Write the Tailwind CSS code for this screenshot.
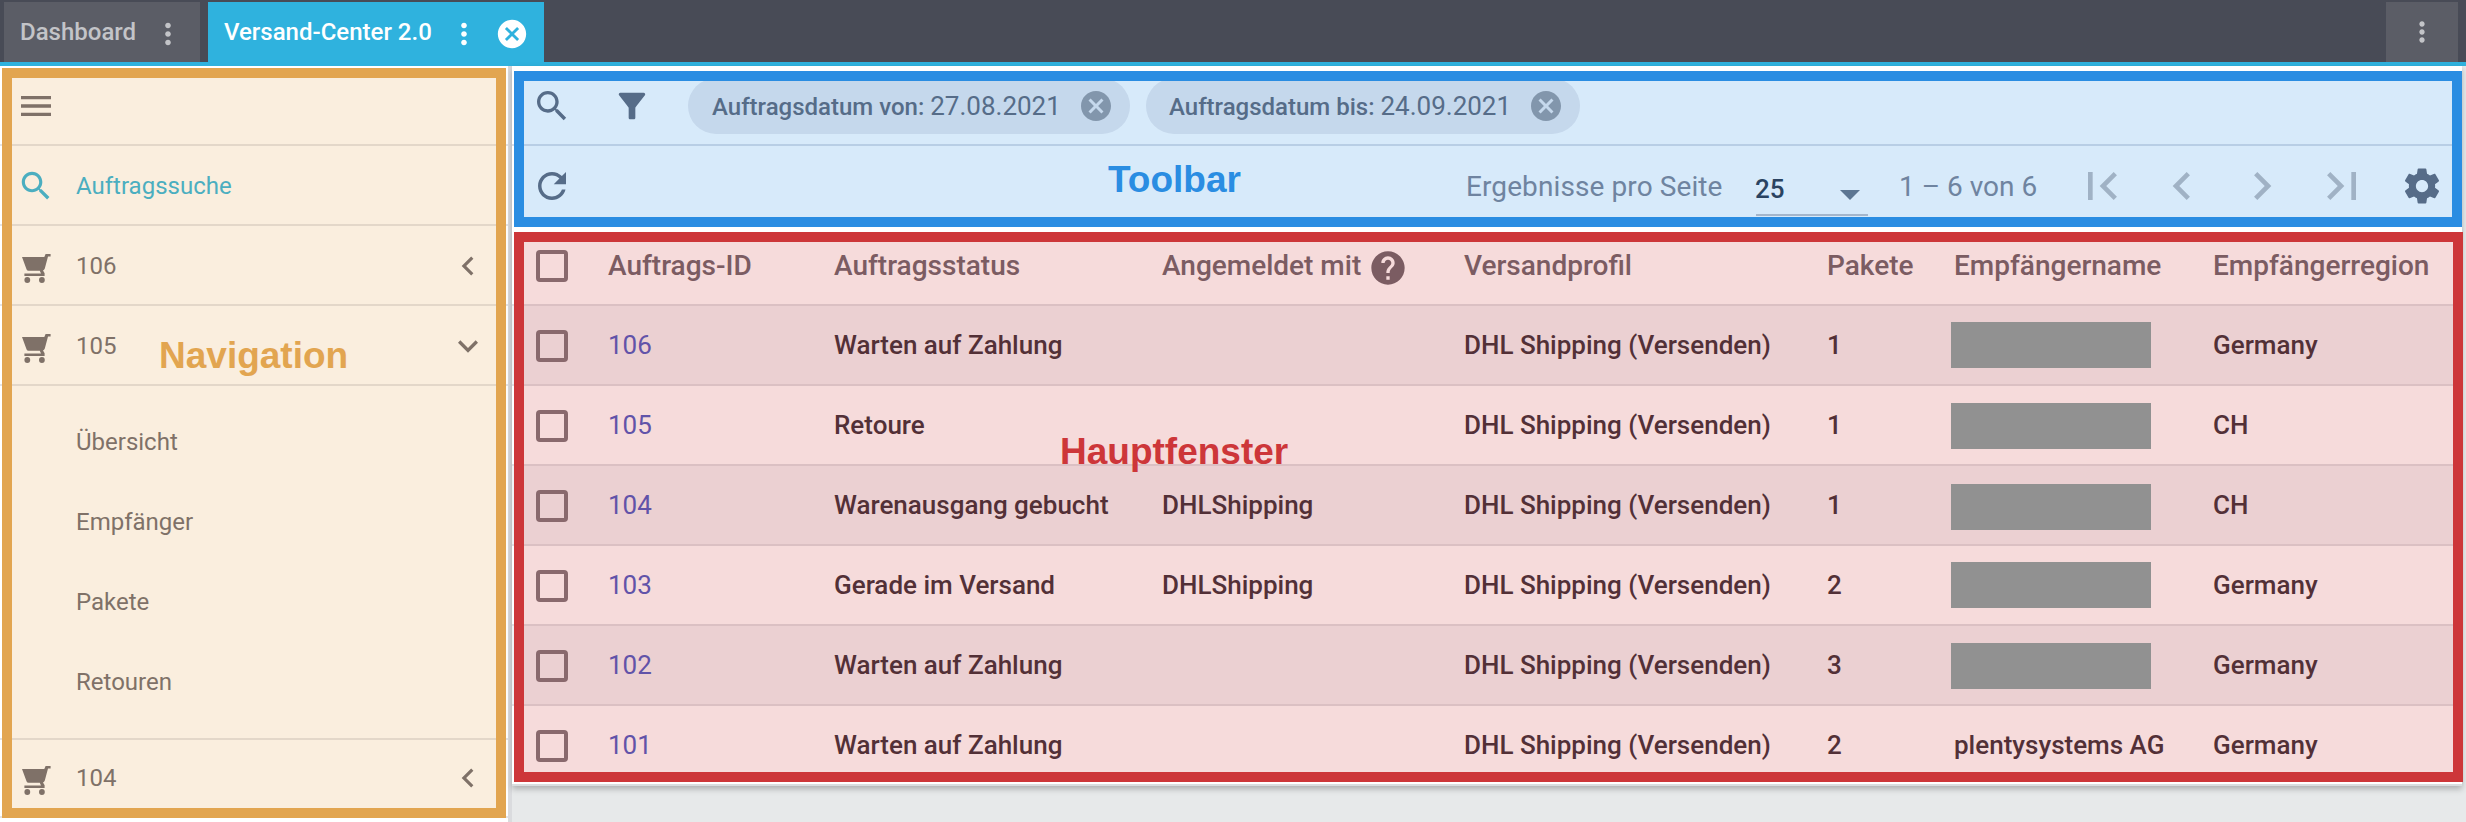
<!DOCTYPE html>
<html lang="de">
<head>
<meta charset="utf-8">
<title>Versand-Center 2.0</title>
<script src="https://cdn.jsdelivr.net/npm/@tailwindcss/browser@4"></script>
</head>
<body class="relative w-[2466px] h-[822px] overflow-hidden bg-[#e7e9ea] flex flex-col font-['Roboto','Liberation_Sans',sans-serif]">

<svg class="hidden">
  <symbol id="dots" viewBox="0 0 24 24"><path d="M12 8c1.1 0 2-.9 2-2s-.9-2-2-2-2 .9-2 2 .9 2 2 2zm0 2c-1.1 0-2 .9-2 2s.9 2 2 2 2-.9 2-2-.9-2-2-2zm0 6c-1.1 0-2 .9-2 2s.9 2 2 2 2-.9 2-2-.9-2-2-2z"/></symbol>
  <symbol id="cancel" viewBox="0 0 24 24"><path d="M12 2C6.47 2 2 6.47 2 12s4.47 10 10 10 10-4.47 10-10S17.53 2 12 2zm5 13.59L15.59 17 12 13.41 8.41 17 7 15.59 10.59 12 7 8.41 8.41 7 12 10.59 15.59 7 17 8.41 13.41 12 17 15.59z"/></symbol>
  <symbol id="menu" viewBox="0 0 24 24"><path d="M3 18h18v-2H3v2zm0-5h18v-2H3v2zm0-7v2h18V6H3z"/></symbol>
  <symbol id="search" viewBox="0 0 24 24"><path d="M15.5 14h-.79l-.28-.27C15.41 12.59 16 11.11 16 9.5 16 5.91 13.09 3 9.5 3S3 5.91 3 9.5 5.91 16 9.5 16c1.61 0 3.09-.59 4.23-1.57l.27.28v.79l5 4.99L20.49 19l-4.99-5zm-6 0C7.01 14 5 11.99 5 9.5S7.01 5 9.5 5 14 7.01 14 9.5 11.99 14 9.5 14z"/></symbol>
  <symbol id="filter" viewBox="0 0 24 24"><path d="M4.25 5.61C6.27 8.2 10 13 10 13v6c0 .55.45 1 1 1h2c.55 0 1-.45 1-1v-6s3.72-4.8 5.74-7.39c.51-.66.04-1.61-.79-1.61H5.04c-.83 0-1.3.95-.79 1.61z"/></symbol>
  <symbol id="refresh" viewBox="0 0 24 24"><path d="M17.65 6.35C16.2 4.9 14.21 4 12 4c-4.42 0-7.99 3.58-7.99 8s3.57 8 7.99 8c3.73 0 6.84-2.55 7.73-6h-2.08c-.82 2.33-3.04 4-5.65 4-3.31 0-6-2.69-6-6s2.69-6 6-6c1.66 0 3.14.69 4.22 1.78L13 11h7V4l-2.35 2.35z"/></symbol>
  <symbol id="left" viewBox="0 0 24 24"><path d="M15.41 7.41L14 6l-6 6 6 6 1.41-1.41L10.83 12z"/></symbol>
  <symbol id="right" viewBox="0 0 24 24"><path d="M10 6L8.59 7.41 13.17 12l-4.58 4.59L10 18l6-6z"/></symbol>
  <symbol id="down" viewBox="0 0 24 24"><path d="M16.59 8.59L12 13.17 7.41 8.59 6 10l6 6 6-6z"/></symbol>
  <symbol id="first" viewBox="0 0 24 24"><path d="M18.41 16.59L13.82 12l4.59-4.59L17 6l-6 6 6 6zM6 6h2v12H6z"/></symbol>
  <symbol id="last" viewBox="0 0 24 24"><path d="M5.59 7.41L10.18 12l-4.59 4.59L7 18l6-6-6-6zM16 6h2v12h-2z"/></symbol>
  <symbol id="help" viewBox="0 0 24 24"><path d="M12 2C6.48 2 2 6.48 2 12s4.48 10 10 10 10-4.48 10-10S17.52 2 12 2zm1 17h-2v-2h2v2zm2.07-7.75l-.9.92C13.45 12.9 13 13.5 13 15h-2v-.5c0-1.1.45-2.1 1.17-2.83l1.24-1.26c.37-.36.59-.86.59-1.41 0-1.1-.9-2-2-2s-2 .9-2 2H8c0-2.21 1.79-4 4-4s4 1.79 4 4c0 .88-.36 1.68-.93 2.25z"/></symbol>
  <symbol id="gear" viewBox="0 0 24 24"><path d="M19.43 12.98c.04-.32.07-.64.07-.98s-.03-.66-.07-.98l2.11-1.65c.19-.15.24-.42.12-.64l-2-3.46c-.12-.22-.39-.3-.61-.22l-2.49 1c-.52-.4-1.08-.73-1.69-.98l-.38-2.65C14.46 2.18 14.25 2 14 2h-4c-.25 0-.46.18-.49.42l-.38 2.65c-.61.25-1.17.59-1.69.98l-2.49-1c-.23-.09-.49 0-.61.22l-2 3.46c-.13.22-.07.49.12.64l2.11 1.65c-.04.32-.07.65-.07.98s.03.66.07.98l-2.11 1.65c-.19.15-.24.42-.12.64l2 3.46c.12.22.39.3.61.22l2.49-1c.52.4 1.08.73 1.69.98l.38 2.65c.03.24.24.42.49.42h4c.25 0 .46-.18.49-.42l.38-2.65c.61-.25 1.17-.59 1.69-.98l2.49 1c.23.09.49 0 .61-.22l2-3.46c.12-.22.07-.49-.12-.64l-2.11-1.65zM12 15.5c-1.93 0-3.5-1.57-3.5-3.5s1.57-3.5 3.5-3.5 3.5 1.57 3.5 3.5-1.57 3.5-3.5 3.5z"/></symbol>
  <symbol id="cart" viewBox="0 0 29 29"><path d="M0 3H22.3L23.6 0H28.6V2.4H26L22.8 14.5Q22.2 16 21 16.4L22.6 19.3V22H2.4V19.4H19L17.8 16.8H6.5Q5.2 16.8 4.6 15.5Z"/><circle cx="5.3" cy="26" r="2.9"/><circle cx="19.9" cy="26" r="2.9"/></symbol>
</svg>

<!-- Tab bar -->
<header class="h-[66px] shrink-0 flex items-stretch bg-[#484b56] border-b-4 border-[#2fb2de] pt-0.5 pl-1 pr-2 text-2xl font-medium">
  <div class="w-[196px] flex items-center bg-[#5b5d66] text-[#c3c4c8] pl-4">
    <span class="w-[131px]">Dashboard</span>
    <svg class="size-[34px] mt-1 fill-current"><use href="#dots"/></svg>
  </div>
  <div class="ml-2 w-[336px] flex items-center bg-[#2fb2de] text-white pl-4">
    <span class="w-[223px]">Versand-Center 2.0</span>
    <svg class="size-[34px] mt-1 fill-current"><use href="#dots"/></svg>
    <svg class="size-[34px] mt-1 ml-[14px] fill-current"><use href="#cancel"/></svg>
  </div>
  <div class="ml-auto w-[72px] flex items-center justify-center bg-[#5b5d66] text-[#c3c4c8]">
    <svg class="size-8 fill-current"><use href="#dots"/></svg>
  </div>
</header>

<div class="flex flex-1 min-h-0">
  <!-- Navigation -->
  <nav class="w-[512px] shrink-0 bg-white border-r-4 border-[#dadbde] text-2xl text-[#68666e]">
    <div class="h-20 flex items-center border-b-2 border-[#e3e3e5] pl-4 pt-0.5">
      <svg class="size-10 fill-current"><use href="#menu"/></svg>
    </div>
    <div class="h-20 flex items-center border-b-2 border-[#e3e3e5] pl-[17px] pt-0.5 text-[#28b1da]">
      <svg class="size-[38px] fill-current"><use href="#search"/></svg>
      <span class="ml-[21px]">Auftragssuche</span>
    </div>
    <div class="h-20 flex items-center border-b-2 border-[#e3e3e5] pl-[22px] pt-0.5">
      <svg class="size-[29px] mt-1 fill-current"><use href="#cart"/></svg>
      <span class="ml-[25px]">106</span>
      <svg class="size-[38px] ml-auto mr-[21px] fill-current"><use href="#left"/></svg>
    </div>
    <div class="h-20 flex items-center border-b-2 border-[#e3e3e5] pl-[22px] pt-0.5">
      <svg class="size-[29px] mt-1 fill-current"><use href="#cart"/></svg>
      <span class="ml-[25px]">105</span>
      <svg class="size-10 ml-auto mr-[20px] fill-current"><use href="#down"/></svg>
    </div>
    <ul class="py-4 pl-[76px] leading-[80px]">
      <li>Übersicht</li>
      <li>Empfänger</li>
      <li>Pakete</li>
      <li>Retouren</li>
    </ul>
    <div class="h-20 flex items-center border-y-2 border-[#e3e3e5] pl-[22px]">
      <svg class="size-[29px] mt-1 fill-current"><use href="#cart"/></svg>
      <span class="ml-[25px]">104</span>
      <svg class="size-[38px] ml-auto mr-[21px] fill-current"><use href="#left"/></svg>
    </div>
    <div class="h-1 bg-white"></div>
  </nav>

  <main class="w-[1950px] h-[720px] shrink-0 bg-white border-b-2 border-[#dadddf] shadow-[0_3px_6px_rgba(0,0,0,0.25)]">
    <!-- Filter row -->
    <div class="h-20 flex items-center border-b-2 border-[#d9dde5] pl-5 pt-0.5 text-[#606473]">
      <svg class="size-10 fill-current"><use href="#search"/></svg>
      <svg class="size-10 ml-10 fill-current"><use href="#filter"/></svg>
      <div class="ml-9 w-[442px] h-14 rounded-full bg-[#e9e9ee] flex items-center pl-6 pr-4">
        <span class="text-2xl leading-7 font-medium whitespace-nowrap">Auftragsdatum von: <span class="text-[26px] leading-7 font-normal">27.08.2021</span></span>
        <svg class="size-9 ml-auto fill-[#97989f]"><use href="#cancel"/></svg>
      </div>
      <div class="ml-4 w-[434px] h-14 rounded-full bg-[#e9e9ee] flex items-center pl-[23px] pr-4">
        <span class="text-2xl leading-7 font-medium whitespace-nowrap">Auftragsdatum bis: <span class="text-[26px] leading-7 font-normal">24.09.2021</span></span>
        <svg class="size-9 ml-auto fill-[#97989f]"><use href="#cancel"/></svg>
      </div>
    </div>
    <!-- Paginator row -->
    <div class="h-20 flex items-center pl-[19px] pr-[19px] text-[28px] text-[#7f8290]">
      <svg class="size-[42px] fill-[#606473]"><use href="#refresh"/></svg>
      <span class="ml-auto pt-px w-[290px] tracking-[0.1px]">Ergebnisse pro Seite</span>
      <div class="w-28 h-[70px] self-start border-b-2 border-[#c0bfc6] flex items-center justify-between pr-2 pt-[18px] text-[26px] font-medium text-[#2b3243]">
        <span class="-ml-px">25</span>
        <span class="mt-3 border-x-[10px] border-t-[10px] border-x-transparent border-t-[#68717f]"></span>
      </div>
      <span class="pl-[31px] pt-px w-[194px] whitespace-nowrap">1 – 6 von 6</span>
      <div class="flex fill-[#bcbbbe]">
        <svg class="size-14 mx-3"><use href="#first"/></svg>
        <svg class="size-14 mx-3"><use href="#left"/></svg>
        <svg class="size-14 mx-3"><use href="#right"/></svg>
        <svg class="size-14 mx-3"><use href="#last"/></svg>
      </div>
      <svg class="size-[42px] ml-[19px] fill-[#606473]"><use href="#gear"/></svg>
    </div>
    <!-- Order table -->
    <div class="h-20 grid grid-cols-[72px_226px_328px_302px_363px_127px_259px_1fr] items-center pl-6 pt-0.5 border-b-2 border-[#dedee2] text-[28px] font-medium text-[#6a646c] whitespace-nowrap">
      <span class="size-8 rounded border-4 border-[#7b7479]"></span>
      <span>Auftrags-ID</span>
      <span>Auftragsstatus</span>
      <span class="flex items-center">Angemeldet mit<svg class="size-10 ml-[7px] mt-[3px] fill-current"><use href="#help"/></svg></span>
      <span>Versandprofil</span>
      <span>Pakete</span>
      <span>Empfängername</span>
      <span>Empfängerregion</span>
    </div>
    <div id="rows"></div>
  </main>
</div>

<!-- Area markers -->
<div class="absolute left-[2px] top-[68px] w-[504px] h-[750px] border-10 border-[#e2a550] bg-[#e2a550]/19 bg-clip-padding"></div>
<div class="absolute left-[514px] top-[71px] w-[1948px] h-[156px] border-10 border-[#2a8de2] bg-[#2a8de2]/19 bg-clip-padding"></div>
<div class="absolute left-[514px] top-[232px] w-[1949px] h-[550px] border-10 border-[#cd3639] bg-[#cd3639]/18 bg-clip-padding"></div>
<div class="absolute left-[159px] top-[335px] leading-[42px] text-[37px] font-bold font-['Liberation_Sans',sans-serif] text-[#e2a550]">Navigation</div>
<div class="absolute left-[1108px] top-[159px] leading-[42px] text-[37px] font-bold font-['Liberation_Sans',sans-serif] text-[#2a8de2]">Toolbar</div>
<div class="absolute left-[1060px] top-[431px] leading-[42px] text-[37px] font-bold font-['Liberation_Sans',sans-serif] text-[#cd3639]">Hauptfenster</div>
<!-- Redacted recipient names -->
<div id="redactions"></div>

<script>
  const orders = [
    ['106', 'Warten auf Zahlung', '', '1', '', 'Germany'],
    ['105', 'Retoure', '', '1', '', 'CH'],
    ['104', 'Warenausgang gebucht', 'DHLShipping', '1', '', 'CH'],
    ['103', 'Gerade im Versand', 'DHLShipping', '2', '', 'Germany'],
    ['102', 'Warten auf Zahlung', '', '3', '', 'Germany'],
    ['101', 'Warten auf Zahlung', '', '2', 'plentysystems AG', 'Germany'],
  ];
  document.getElementById('rows').innerHTML = orders.map(([id, status, reg, count, name, region], i) => `
    <div class="${i === 5 ? 'h-[78px]' : 'h-20 border-b-2'} ${i % 2 ? 'bg-white' : 'bg-[#f2f2f4]'} grid grid-cols-[72px_226px_328px_302px_363px_127px_259px_1fr] items-center pl-6 border-[#dedee2] text-[26px] font-medium text-[#382f38] whitespace-nowrap">
      <span class="size-8 mt-0.5 rounded border-4 border-[#7b7479]"></span>
      <span class="font-normal text-[#4a59c2]">${id}</span>
      <span>${status}</span>
      <span>${reg}</span>
      <span>DHL Shipping (Versenden)</span>
      <span>${count}</span>
      <span>${name}</span>
      <span>${region}</span>
    </div>`).join('');
  document.getElementById('redactions').innerHTML = [322, 403, 484, 562, 643].map(y =>
    `<div class="absolute left-[1951px] w-[200px] h-[46px] bg-[#919191]" style="top:${y}px"></div>`).join('');
</script>
</body>
</html>
